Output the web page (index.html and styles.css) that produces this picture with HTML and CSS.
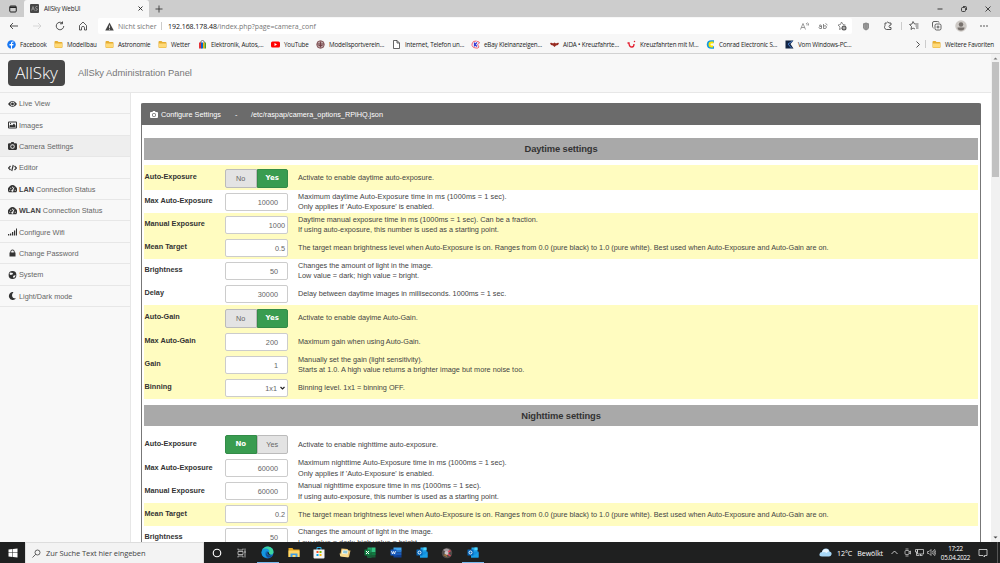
FILE: index.html
```html
<!DOCTYPE html>
<html lang="de">
<head>
<meta charset="utf-8">
<title>AllSky WebUI</title>
<link rel="stylesheet" href="styles.css">
</head>
<body>
<svg width="0" height="0" class="defs">
  <symbol id="folder" viewBox="0 0 18 16"><path d="M1 3q0-2 2-2h4l2 2h6q2 0 2 2v8q0 2-2 2H3q-2 0-2-2z" fill="#e6ae32"/><path d="M2 6h14v7q0 1-1 1H3q-1 0-1-1z" fill="#ffda78"/></symbol>
  <symbol id="camera" viewBox="0 0 16 14"><path fill-rule="evenodd" d="M2 2h3l1-2h4l1 2h3q2 0 2 2v8q0 2-2 2H2q-2 0-2-2V4q0-2 2-2zM8 4a4 4 0 100 8 4 4 0 000-8zm0 1.500a2.500 2.500 0 110 5 2.500 2.500 0 010-5z"/></symbol>
  <symbol id="gauge" viewBox="0 0 18 15"><path fill-rule="evenodd" d="M1.500 14A9 9 0 1116.500 14zM2.500 9v2h2V9zm2-4v2h2V5zM8 3v2h2V3zm5.500 6v2h2V9zm-2-5l-3 5a2 2 0 102 1l2.400-5.500z"/></symbol>
  <symbol id="outlook" viewBox="0 0 24 22"><path d="M9 1h12v9H9z" fill="#28a8ea"/><path d="M15 1h6v5h-6z" fill="#50d9ff"/><path d="M8 9h15v12H8z" fill="#1490df"/><path d="M8 10l7.500 6L23 10v11H8z" fill="#1a9fe8"/><rect x="1" y="5" width="12" height="12" rx="1" fill="#0364b8"/><circle cx="7" cy="11" r="3" fill="none" stroke="#fff" stroke-width="1.800"/></symbol>
</svg>

<header class="browser">
  <div class="tabstrip">
    <div class="tab-menu"><svg width="8" height="8" viewBox="0 0 16 16"><rect x="1.500" y="2" width="13" height="12" rx="2" fill="none" stroke="#222" stroke-width="2"/><path d="M2 3h12v3H2z" fill="#222"/></svg></div>
    <div class="tab">
      <svg width="9" height="9" viewBox="0 0 18 18"><rect width="18" height="18" rx="2" fill="#474747"/><path d="M3 13L6 5l3 8M4 10h4M15 5q-4-1-4 2t4 3q0 3-4 3" fill="none" stroke="#bbb" stroke-width="1.200"/></svg>
      <span class="tab-title">AllSky WebUI</span>
      <svg class="tab-close" width="5" height="5" viewBox="0 0 10 10"><path d="M1 1l8 8M9 1L1 9" stroke="#222" stroke-width="1.800"/></svg>
    </div>
    <svg class="tab-new" width="8" height="8" viewBox="0 0 16 16"><path d="M8 1v14M1 8h14" stroke="#333" stroke-width="1.700"/></svg>
    <div class="window-buttons">
      <svg width="8" height="8" viewBox="0 0 16 16"><path d="M3 8h10" stroke="#222" stroke-width="1.700"/></svg>
      <svg width="8" height="8" viewBox="0 0 16 16"><g fill="none" stroke="#222" stroke-width="1.600"><rect x="3" y="5" width="8" height="8" rx="2"/><path d="M6 3h5q2 0 2 2v5"/></g></svg>
      <svg width="8" height="8" viewBox="0 0 16 16"><path d="M3 3l10 10M13 3L3 13" stroke="#222" stroke-width="1.600"/></svg>
    </div>
  </div>

  <div class="toolbar">
    <div class="nav-buttons">
      <svg width="10" height="10" viewBox="0 0 20 20"><path d="M18 10H2m6-6l-6 6 6 6" fill="none" stroke="#333" stroke-width="1.700"/></svg>
      <svg width="10" height="10" viewBox="0 0 20 20"><path d="M2 10h16m-6-6l6 6-6 6" fill="none" stroke="#ccc" stroke-width="1.500"/></svg>
      <svg width="10" height="10" viewBox="0 0 20 20"><path d="M17.500 10a7.500 7.500 0 11-3-6M15 1v4.500h-5" fill="none" stroke="#333" stroke-width="1.700"/></svg>
      <svg width="10" height="10" viewBox="0 0 20 20"><path d="M3 9l7-7 7 7v9h-4v-5q0-2-3-2t-3 2v5H3z" fill="none" stroke="#333" stroke-width="1.600"/></svg>
    </div>
    <div class="address">
      <svg width="9" height="9" viewBox="0 0 18 18"><path d="M9 1l8.500 16H.5z" fill="#444"/><path d="M9 7v5m0 1.500v2" stroke="#fff" stroke-width="1.600"/></svg>
      <span class="insecure">Nicht sicher</span><i class="divider"></i>
      <span class="url"><b>192.168.178.48</b>/index.php?page=camera_conf</span>
      <span class="address-tools">
        <svg width="9" height="9" viewBox="0 0 18 18"><path d="M1 15L6 3l5 12M3 11h6M12 2q3 2 2 5M15 1q3 3 2 6" fill="none" stroke="#666" stroke-width="1.300"/></svg>
        <svg width="10" height="9" viewBox="0 0 20 18"><path d="M2 7q5-3 5 1v5q-5 1-5-2t5-2M11 4v9q6 1 6-3t-6-2M15 3l4 3" fill="none" stroke="#666" stroke-width="1.500"/></svg>
        <svg width="10" height="10" viewBox="0 0 20 20"><path d="M9 15l-4 2 1-5-4-4 5-1 2-5 3 5 5 1" fill="none" stroke="#666" stroke-width="1.400"/><circle cx="14" cy="14" r="5" fill="#555"/><path d="M14 11v6m-3-3h6" stroke="#fff" stroke-width="1.200"/></svg>
      </span>
    </div>
    <div class="tools">
      <svg width="8" height="9" viewBox="0 0 16 18"><path d="M8 1l6 2v8q0 4-6 6-6-2-6-6V3z" fill="#8b8b8b"/><path d="M5 5v8m3-9v10m3-9v8" stroke="#aaa"/></svg>
      <svg width="10" height="10" viewBox="0 0 20 20"><path d="M4 4h3q2-4 5 0h4v4q-4 0-4 3t4 2v4H7q-4-1-4-4 0-2 1-4z" fill="none" stroke="#333" stroke-width="1.600"/></svg>
      <i class="divider"></i>
      <svg width="10" height="10" viewBox="0 0 20 20"><path d="M12 16l-4-2-4 3 1-6-4-4 5-1 2-5 3 5h8M13 10h6m-5 4h5" fill="none" stroke="#333" stroke-width="1.500"/></svg>
      <svg width="10" height="10" viewBox="0 0 20 20"><g fill="none" stroke="#333" stroke-width="1.500"><rect x="6" y="6" width="12" height="12" rx="3"/><path d="M3 14q-2-1-2-3V4q0-3 3-3h7q3 0 3 2M12 9v6m-3-3h6"/></g></svg>
      <svg width="12" height="12" viewBox="0 0 24 24"><circle cx="12" cy="12" r="11.500" fill="#cecac6"/><circle cx="12" cy="9" r="4.500" fill="#77716d"/><path d="M5 15h14q0 6-7 6t-7-6z" fill="#77716d"/></svg>
      <svg width="8" height="4" viewBox="0 0 16 8"><g fill="#333"><circle cx="2" cy="4" r="1.500"/><circle cx="8" cy="4" r="1.500"/><circle cx="14" cy="4" r="1.500"/></g></svg>
    </div>
  </div>

  <nav class="favorites">
    <span class="fav"><svg viewBox="0 0 18 18"><circle cx="9" cy="9" r="8.500" fill="#1877f2"/><path d="M8 18v-7H5V8h3V6q0-4 5-3v2q-3-.5-3 1v2h3l-.5 3H10v7z" fill="#fff"/></svg>Facebook</span>
    <span class="fav"><svg><use href="#folder"/></svg>Modellbau</span>
    <span class="fav"><svg><use href="#folder"/></svg>Astronomie</span>
    <span class="fav"><svg><use href="#folder"/></svg>Wetter</span>
    <span class="fav"><svg viewBox="0 0 18 18"><path d="M5 6q0-5 4-5t4 5" fill="none" stroke="#555" stroke-width="1.500"/><path d="M2 5h5v12H2z" fill="#e53238"/><path d="M6 5h4v12H6z" fill="#0064d2"/><path d="M10 5h3v12h-3z" fill="#f5af02"/><path d="M13 5h3v12h-3z" fill="#4b9e25"/></svg>Elektronik, Autos,...</span>
    <span class="fav"><svg viewBox="0 0 18 18"><rect x="0" y="3" width="18" height="12" rx="3" fill="#f00"/><path d="M7 6l5 3-5 3z" fill="#fff"/></svg>YouTube</span>
    <span class="fav"><svg viewBox="0 0 18 18"><circle cx="9" cy="9" r="7.500" fill="#bba3a3" stroke="#86585b" stroke-width="2"/><path d="M2 8h14M5 11h8M9 3v12" stroke="#713c42" stroke-width="1.800"/></svg>Modellsportverein...</span>
    <span class="fav"><svg viewBox="0 0 18 18"><path d="M3 1h7l5 5v11H3zm7 0v5h5" fill="#fff" stroke="#333" stroke-width="1.500"/></svg>Internet, Telefon un...</span>
    <span class="fav"><svg viewBox="0 0 18 18"><path d="M11 2q-8-1-9 6t8 8M12 3q5 0 5 3l-4 3 3 5q-2 3-6 2" fill="none" stroke="#f05068" stroke-width="1.800"/><path d="M7 5v8m5-8L8 9l4 4" fill="none" stroke="#373bd4" stroke-width="2.400"/></svg>eBay Kleinanzeigen...</span>
    <span class="fav"><svg viewBox="0 0 18 18"><path d="M0 6q4-1 6 1l3-2 3 2q3-2 6-1-1 5-6 5l-3 3-3-3Q1 11 0 6z" fill="#982b22"/></svg>AIDA • Kreuzfahrte...</span>
    <span class="fav"><svg viewBox="0 0 18 18"><path d="M1 6h3q0 8 6 8 4 0 4-6" fill="none" stroke="#e31c2d" stroke-width="2.600"/><circle cx="15" cy="3" r="1.500" fill="#e31c2d"/></svg>Kreuzfahrten mit M...</span>
    <span class="fav"><svg viewBox="0 0 18 18"><path d="M16 3h-5q-7 0-7 6t7 6h5" fill="none" stroke="#149be0" stroke-width="5"/><path d="M15 5h-4q-4 0-4 4t4 4h3" fill="none" stroke="#ffe600" stroke-width="4"/></svg>Conrad Electronic S...</span>
    <span class="fav"><svg viewBox="0 0 18 18"><path d="M1 1h16l-6 7 6 9H1z" fill="#112443"/><path d="M15 2L6 8l7 8" fill="none" stroke="#497bc7" stroke-width="2"/></svg>Vom Windows-PC...</span>
    <svg class="more" viewBox="0 0 8 14"><path d="M1 1l6 6-6 6" fill="none" stroke="#333" stroke-width="1.700"/></svg>
    <i class="divider"></i>
    <span class="fav"><svg><use href="#folder"/></svg>Weitere Favoriten</span>
  </nav>
</header>

<main class="page">
  <div class="app">
    <div class="navbar">
      <div class="logo">AllSky</div>
      <span class="brand">AllSky Administration Panel</span>
    </div>
    <div class="body">
      <nav class="side">
        <a class="side-item"><svg viewBox="0 0 18 14"><path d="M0 7q4-6 9-6t9 6q-4 6-9 6T0 7z"/><circle cx="9" cy="7" r="4.300" fill="#fff"/><circle cx="9" cy="7" r="2.800"/></svg><span>Live View</span></a>
        <a class="side-item"><svg viewBox="0 0 18 14"><path fill-rule="evenodd" d="M2 0h14q2 0 2 2v10q0 2-2 2H2q-2 0-2-2V2q0-2 2-2zm0 2v10h14V2zm1 9V8l3-2 2 2 4-4 3 4v3zm1-6V3h2v2z"/></svg><span>Images</span></a>
        <a class="side-item active"><svg><use href="#camera"/></svg><span>Camera Settings</span></a>
        <a class="side-item"><svg viewBox="0 0 18 14"><path d="M5 3L1 7l4 4m8-8l4 4-4 4M10.500 1l-3 12" fill="none" stroke="#333" stroke-width="2.300"/></svg><span>Editor</span></a>
        <a class="side-item"><svg><use href="#gauge"/></svg><span><b>LAN</b> Connection Status</span></a>
        <a class="side-item"><svg><use href="#gauge"/></svg><span><b>WLAN</b> Connection Status</span></a>
        <a class="side-item"><svg viewBox="0 0 18 14"><path d="M0 11h2.500v3H0zm4-1h2.500v4H4zm4-3h2.500v7H8zm4-3h2.500v10H12zm4-4h2v14h-2z"/></svg><span>Configure Wifi</span></a>
        <a class="side-item"><svg viewBox="0 0 18 14"><path d="M3 6h12v8H3z"/><path d="M5.500 7V4q0-3 3.500-3t3.500 3v3" fill="none" stroke="#333" stroke-width="2"/></svg><span>Change Password</span></a>
        <a class="side-item"><svg viewBox="0 0 18 16"><circle cx="9" cy="8" r="7.800"/><path d="M4 3l6 1-1 3-4 1-2-2zM10 10l5-2-1 4-3 2z" fill="#f8f8f8"/></svg><span>System</span></a>
        <a class="side-item"><svg viewBox="0 0 18 16"><path d="M11 0a8 8 0 105 13Q8 13 8 6q1-4 3-6z"/></svg><span>Light/Dark mode</span></a>
      </nav>

      <section class="content">
        <div class="panel">
          <div class="panel-heading"><svg><use href="#camera"/></svg><span class="heading-name">Configure Settings</span><span class="heading-dash">-</span><span>/etc/raspap/camera_options_RPiHQ.json</span></div>
          <div class="settings">
            <h2 class="group-title">Daytime settings</h2>
            <div class="row tall marked"><label>Auto-Exposure</label><div class="toggle"><span>No</span><span class="on">Yes</span></div><p>Activate to enable daytime auto-exposure.</p></div>
            <div class="row"><label>Max Auto-Exposure</label><div class="field spin">10000</div><p><span class="wide">Maximum daytime Auto-Exposure time in ms (1000ms = 1 sec).</span><br>Only applies if 'Auto-Exposure' is enabled.</p></div>
            <div class="row marked"><label>Manual Exposure</label><div class="field">1000</div><p>Daytime manual exposure time in ms (1000ms = 1 sec). Can be a fraction.<br>If using auto-exposure, this number is used as a starting point.</p></div>
            <div class="row marked"><label>Mean Target</label><div class="field">0.5</div><p>The target mean brightness level when Auto-Exposure is on. Ranges from 0.0 (pure black) to 1.0 (pure white). Best used when Auto-Exposure and Auto-Gain are on.</p></div>
            <div class="row"><label>Brightness</label><div class="field spin">50</div><p>Changes the amount of light in the image.<br>Low value = dark; high value = bright.</p></div>
            <div class="row"><label>Delay</label><div class="field spin">30000</div><p>Delay between daytime images in milliseconds. 1000ms = 1 sec.</p></div>
            <div class="row tall marked"><label>Auto-Gain</label><div class="toggle"><span>No</span><span class="on">Yes</span></div><p>Activate to enable dayime Auto-Gain.</p></div>
            <div class="row marked"><label>Max Auto-Gain</label><div class="field spin">200</div><p>Maximum gain when using Auto-Gain.</p></div>
            <div class="row marked"><label>Gain</label><div class="field spin">1</div><p>Manually set the gain (light sensitivity).<br>Starts at 1.0. A high value returns a brighter image but more noise too.</p></div>
            <div class="row marked"><label>Binning</label><div class="field select">1x1<svg width="5" height="4" viewBox="0 0 10 8"><path d="M1 2l4 4 4-4" fill="none" stroke="#222" stroke-width="2.400"/></svg></div><p>Binning level. 1x1 = binning OFF.</p></div>
            <h2 class="group-title second">Nighttime settings</h2>
            <div class="row tall"><label>Auto-Exposure</label><div class="toggle"><span class="on">No</span><span>Yes</span></div><p>Activate to enable nighttime auto-exposure.</p></div>
            <div class="row"><label>Max Auto-Exposure</label><div class="field spin">60000</div><p>Maximum nighttime Auto-Exposure time in ms (1000ms = 1 sec).<br>Only applies if 'Auto-Exposure' is enabled.</p></div>
            <div class="row"><label>Manual Exposure</label><div class="field spin">60000</div><p>Manual nighttime exposure time in ms (1000ms = 1 sec).<br>If using auto-exposure, this number is used as a starting point.</p></div>
            <div class="row marked"><label>Mean Target</label><div class="field">0.2</div><p>The target mean brightness level when Auto-Exposure is on. Ranges from 0.0 (pure black) to 1.0 (pure white). Best used when Auto-Exposure and Auto-Gain are on.</p></div>
            <div class="row"><label>Brightness</label><div class="field spin">50</div><p>Changes the amount of light in the image.<br>Low value = dark; high value = bright.</p></div>
          </div>
        </div>
      </section>
    </div>
  </div>
  <div class="scrollbar"><svg width="5" height="3" viewBox="0 0 10 6"><path d="M1 5l4-4 4 4z" fill="#777"/></svg><div class="thumb"></div><svg width="5" height="3" viewBox="0 0 10 6"><path d="M1 1l4 4 4-4z" fill="#444"/></svg></div>
</main>

<footer class="taskbar">
  <div class="start"><svg width="10" height="10" viewBox="0 0 20 20"><path d="M1 3l8-1v7H1zm9-1l9-1v8h-9zM1 10h8v8l-8-1zm9 0h9v9l-9-1z" fill="#fff"/></svg></div>
  <div class="search"><svg width="9" height="9" viewBox="0 0 18 18"><g fill="none" stroke="#333" stroke-width="1.500"><circle cx="11" cy="7" r="5"/><path d="M7.500 10.500L1 17"/></g></svg><span>Zur Suche Text hier eingeben</span></div>
  <div class="apps">
    <div class="app-icon"><svg width="10" height="10" viewBox="0 0 20 20"><circle cx="10" cy="10" r="7.500" fill="none" stroke="#fff" stroke-width="2.300"/></svg></div>
    <div class="app-icon"><svg width="10" height="10" viewBox="0 0 20 20"><path d="M2 1v3h10V1M2 19v-3h10v3M2 7h10v6H2zM16 1v18M14 8h4" fill="none" stroke="#ccc" stroke-width="1.600"/></svg></div>
    <div class="app-icon running"><svg width="13" height="13" viewBox="0 0 26 26"><circle cx="13" cy="13" r="12" fill="#0e73c9"/><path d="M2 10Q5 0 15 1q10 2 10 11 0 6-8 5-3-1-1-4-1-5-7-5-5 0-7 2z" fill="#3dd6a1"/><path d="M1 13q1-9 10-8 6 1 6 7-5-4-8 0-3 6 4 11Q2 24 1 13z" fill="#1597df"/><path d="M12 12q-3 8 11 7-4 5-9 4-7-4-2-11z" fill="#164c91"/><path d="M13 12q-1 6 6 6-1-2-3-3 1-3-3-3z" fill="#202121"/></svg></div>
    <div class="app-icon"><svg width="12" height="11" viewBox="0 0 24 22"><path d="M1 2h8l2 3h12v15H1z" fill="#e9a820"/><path d="M1 7h22v13H1z" fill="#ffd869"/><path d="M5 13h14v7H5z" fill="#3f9ce3"/><path d="M9 16h6v4H9z" fill="#ffd869"/></svg></div>
    <div class="app-icon"><svg width="12" height="12" viewBox="0 0 24 24"><path d="M8 6V1h8v5" fill="none" stroke="#26aee9" stroke-width="2"/><path d="M1 5h22v16q0 2-2 2H3q-2 0-2-2z" fill="#f3f3f3"/><path d="M7 8h4v4H7z" fill="#f25022"/><path d="M13 8h4v4h-4z" fill="#7fba00"/><path d="M7 14h4v4H7z" fill="#00a4ef"/><path d="M13 14h4v4h-4z" fill="#ffb900"/></svg></div>
    <div class="app-icon"><svg width="12" height="12" viewBox="0 0 24 24"><path d="M5 3l12 1 2 3h4l-3 13-18-2z" fill="#ecc36d"/><path d="M7 5l12 2-2 9-12-1z" fill="#f4f2dc"/><path d="M9 7l8 1-1 5-8-1z" fill="#91c9d9"/><path d="M1 13l17 2 1 6-16-2z" fill="#f8dc91"/></svg></div>
    <div class="app-icon"><svg width="12" height="11" viewBox="0 0 24 22"><path d="M7 1h8v20H7z" fill="#21a366"/><path d="M15 1h8v10h-8z" fill="#33c481"/><path d="M7 11h16v10H7z" fill="#185c37"/><path d="M15 11h8v5h-8z" fill="#107c41"/><rect x="1" y="5" width="12" height="12" rx="1" fill="#107c41"/><path d="M4 8l6 6m0-6l-6 6" stroke="#fff" stroke-width="2"/></svg></div>
    <div class="app-icon"><svg width="12" height="11" viewBox="0 0 24 22"><path d="M7 1h16v6H7z" fill="#41a5ee"/><path d="M7 6h16v5H7z" fill="#2b7cd3"/><path d="M7 11h16v5H7z" fill="#185abd"/><path d="M7 16h16v5H7z" fill="#103f91"/><rect x="1" y="5" width="12" height="12" rx="1" fill="#185abd"/><path d="M3 8l2 6 2-5 2 5 2-6" fill="none" stroke="#fff" stroke-width="1.600"/></svg></div>
    <div class="app-icon"><svg width="12" height="11"><use href="#outlook"/></svg></div>
    <div class="app-icon"><svg width="12" height="12" viewBox="0 0 24 24"><circle cx="12" cy="12" r="10.500" fill="#514b49"/><path d="M4 6q7-6 14 0l-6 5z" fill="#a69da1"/><path d="M19 7l-8 5 8 6" fill="none" stroke="#e0455b" stroke-width="3"/><circle cx="11" cy="12" r="4" fill="#c9c3c5"/><path d="M4 16l6-2 3 7z" fill="#9f733d"/></svg></div>
    <div class="app-icon running"><svg width="12" height="11"><use href="#outlook"/></svg></div>
  </div>
  <div class="tray">
    <svg width="13" height="9" viewBox="0 0 26 18"><path d="M6 17q-6 0-5-5 1-4 5-4 1-7 8-7 6 0 7 6 5 1 4 6-1 4-5 4z" fill="#a8d8f7"/><path d="M6 9q1-7 8-7 5 0 6 5-3 0-5 3-4-3-9-1z" fill="#e8f6ff"/></svg>
    <span class="weather"><span>12°C</span><span>Bewölkt</span></span>
    <svg class="chevron" width="7" height="5" viewBox="0 0 14 10"><path d="M1 8l6-6 6 6" fill="none" stroke="#eee" stroke-width="1.600"/></svg>
    <svg class="meet" width="7" height="9" viewBox="0 0 14 18"><g fill="none" stroke="#ddd" stroke-width="1.400"><rect x="2" y="5" width="8" height="8" rx="2"/><path d="M10 8l3-2v6l-3-2M3 2h6M3 16h6"/></g></svg>
    <svg class="network" width="9" height="9" viewBox="0 0 18 18"><path d="M5 3h12v9H5zM9 15h6m-4-3v3M1 3h4v5H1zm2 5v7h5" fill="none" stroke="#ddd" stroke-width="1.500"/></svg>
    <svg class="sound" width="9" height="9" viewBox="0 0 18 18"><path d="M1 7h3l4-4v12l-4-4H1zM11 6q2 3 0 6M13 4q4 5 0 10M15 2q5 7 0 14" fill="none" stroke="#ddd" stroke-width="1.300"/></svg>
    <div class="clock"><span>17:22</span><span>05.04.2022</span></div>
    <svg class="notes" width="10" height="10" viewBox="0 0 20 20"><path d="M2 3h16v12h-5v3l-3-3H2z" fill="none" stroke="#eee" stroke-width="1.500"/></svg>
    <i class="desktop-edge"></i>
  </div>
</footer>
</body>
</html>
```
FILE: styles.css
```css
* { box-sizing: border-box; }
body { margin: 0; width: 1000px; height: 563px; overflow: hidden; display: flex; flex-direction: column; background: #fff; font-family: "Open Sans", "Noto Sans", sans-serif; font-size: 6.250px; color: #222; }
svg { display: block; flex: none; }
.defs { position: absolute; }
.divider { width: 1px; height: 8px; background: #ccc; flex: none; }

/* Browser chrome */
.browser { height: 54px; flex: none; background: #f7f7f7; border-bottom: 1px solid #d2d2d2; }
.tabstrip { height: 17px; display: flex; align-items: center; background: #cdcdcd; }
.tab-menu { width: 24px; padding-left: 9px; }
.tab { width: 125px; height: 17px; display: flex; align-items: center; padding: 0 6px; background: #f7f7f7; border-radius: 3px 3px 0 0; }
.tab-title { margin-left: 5px; letter-spacing: -.130px; }
.tab-close { margin-left: auto; }
.tab-new { margin-left: 6px; }
.window-buttons { display: flex; gap: 16px; margin-left: auto; padding-right: 8px; }
.toolbar { height: 18px; display: flex; align-items: center; }
.nav-buttons { width: 98px; padding-left: 9px; display: flex; gap: 13px; }
.address { width: 754px; height: 16px; padding: 0 5px 0 7px; display: flex; align-items: center; background: #fff; border-radius: 2px; font-size: 7px; color: #777; }
.insecure { width: 43px; margin-left: 4px; color: #777; }
.url { margin-left: 6px; letter-spacing: -.040px; }
.url b { font-weight: 400; color: #111; }
.address-tools { margin-left: auto; display: flex; gap: 9px; align-items: center; }
.tools { flex: 1; display: flex; align-items: center; gap: 13px; padding-left: 10px; }
.tools .divider { margin: 0 -6px 0 -5px; }
.favorites { height: 18px; padding-left: 7px; display: grid; grid-template-columns: 47px 51px 53px 40px 73px 45px 76px 79px 79px 77px 79px 79px 131px 9px 7px 65px; align-items: center; }
.fav { display: flex; align-items: center; gap: 4px; white-space: nowrap; letter-spacing: -.150px; }
.fav svg { width: 9px; height: 9px; }
.more { width: 4px; height: 7px; }

/* Page */
.page { flex: 1; min-height: 0; display: flex; font-family: "Liberation Sans", Arial, sans-serif; font-size: 7.290px; }
.app { width: 991px; display: flex; flex-direction: column; overflow: hidden; }
.navbar { height: 39px; flex: none; display: flex; align-items: center; padding: 0 8px 1px; background: #f8f8f8; border-bottom: 1px solid #e7e7e7; }
.logo { width: 57px; height: 26px; background: #474747; border-radius: 4px; color: #fff; font: 300 17px/25px "Open Sans", sans-serif; text-align: center; letter-spacing: -.100px; }
.brand { margin-left: 13px; font-size: 9.375px; color: #777; }
.body { flex: 1; min-height: 0; display: flex; }
.side { width: 131px; flex: none; background: #f8f8f8; border-right: 1px solid #e7e7e7; }
.side-item { height: 21.400px; display: flex; align-items: center; gap: 2px; padding: 1px 0 0 8px; border-bottom: 1px solid #e7e7e7; color: #666; }
.side-item svg { width: 9px; height: 8px; fill: #333; }
.side-item b { color: #444; }
.active { background: #eee; }
.content { flex: 1; padding: 10px 10px 0; }
.panel { height: 460px; border: 1px solid #777; border-top: 0; border-radius: 2px 2px 0 0; }
.panel-heading { height: 22px; margin: 0 -1px; padding-left: 9px; display: flex; align-items: center; background: #6b6b6b; color: #fff; border-radius: 2px 2px 0 0; }
.panel-heading svg { width: 8px; height: 7px; fill: #fff; margin-right: 3px; }
.heading-name { width: 74px; }
.heading-dash { width: 16px; }
.settings { padding: 13px 2px 0; }
.group-title { height: 21.500px; margin: 0 0 5.500px; background: #a9a9a9; text-align: center; font-size: 9.375px; line-height: 22.500px; letter-spacing: -.120px; color: #333; }
.second { margin-top: 5.500px; }
.row { height: 23px; display: grid; grid-template-columns: 81px 63px 1fr; align-items: center; padding-top: .300px; }
.tall { height: 25px; }
.marked { background: #fffcc0; }
.row label { padding-bottom: 1.500px; font-weight: 700; color: #333; padding-left: .500px; }
.row p { margin: 0 0 0 10px; padding-top: 1.400px; line-height: 10.400px; color: #444; white-space: nowrap; }
.wide { letter-spacing: .070px; }
.field { height: 18px; padding: 1px 2px 0 5px; display: flex; align-items: center; justify-content: flex-end; background: #fff; border: 1px solid #ccc; border-radius: 2px; color: #666; }
.spin { padding-right: 9px; }
.select { gap: 3px; }
.toggle { height: 18px; display: grid; grid-template-columns: 1fr 1fr; line-height: 17px; text-align: center; }
.toggle span { border: 1px solid #bbb; background: #e3e3e3; color: #666; border-radius: 2px 0 0 2px; }
.toggle span:last-child { border-radius: 0 2px 2px 0; }
.toggle .on { background: #399c50; border-color: #338b48; color: #fff; font-family: "DejaVu Sans", sans-serif; font-weight: 700; font-size: 7px; }
.scrollbar { width: 9px; display: flex; flex-direction: column; align-items: center; padding: 3px 0; background: #f1f1f1; }
.thumb { width: 7px; height: 115px; margin: 2px 0 auto; background: #c1c1c1; }

/* Taskbar */
.taskbar { height: 21px; flex: none; display: flex; background: #1f2020; color: #fff; }
.start { width: 25px; display: flex; align-items: center; padding-left: 8px; }
.search { width: 179px; display: flex; align-items: center; gap: 5px; padding-left: 6px; background: #f3f3f3; border: 1px solid #ddd; border-bottom: 0; font-size: 7.500px; letter-spacing: -.090px; color: #444; }
.apps { display: flex; }
.app-icon { width: 25.600px; display: grid; place-items: center; }
.running { background: linear-gradient(#76b9ed, #76b9ed) center bottom / 22px 1px no-repeat; }
.tray { flex: 1; display: flex; align-items: center; justify-content: flex-end; }
.weather { width: 46px; margin: 0 4px 0 5px; display: flex; justify-content: space-between; font-size: 7.100px; letter-spacing: -.100px; white-space: nowrap; }
.chevron { margin: 0 6px 0 4px; }
.meet { margin-right: 4px; }
.network { margin-right: 3px; }
.clock { width: 29px; margin: 0 8px 0 5px; display: flex; flex-direction: column; align-items: center; font-size: 6.250px; line-height: 9px; letter-spacing: -.250px; }
.notes { margin-right: 9px; }
.desktop-edge { width: 3px; height: 21px; border-left: 1px solid #555; }
```
